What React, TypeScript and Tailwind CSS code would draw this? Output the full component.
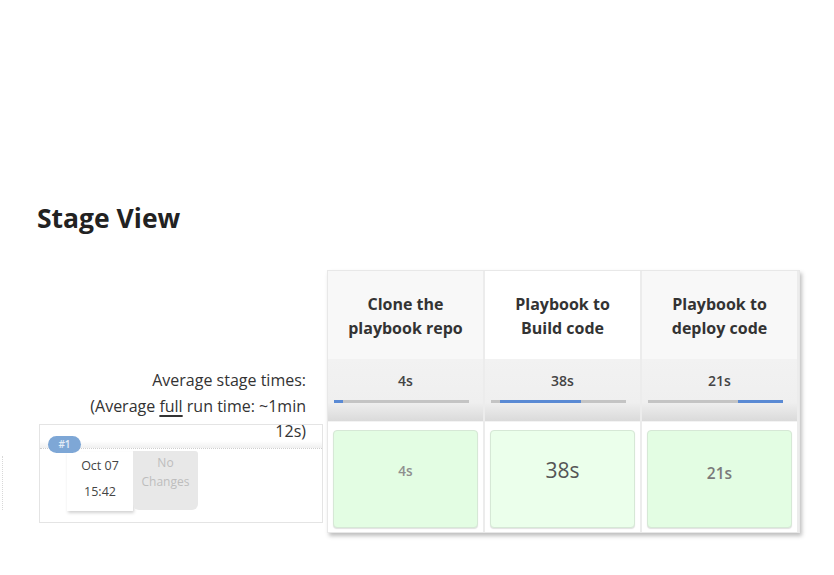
import React from "react";

const font = { fontFamily: '"Open Sans", "Noto Sans", sans-serif' };

type Stage = { name: [string, string]; avg: string; start: number; end: number; hovered?: boolean; runSize: string; runColor: string; runPad: string };

const stages: Stage[] = [
  { name: ["Clone the", "playbook repo"], avg: "4s", start: 0, end: 4 / 63, runSize: "text-[13.5px] font-semibold", runColor: "text-[#8f8f8f]", runPad: "pt-[28px]" },
  { name: ["Playbook to", "Build code"], avg: "38s", start: 4 / 63, end: 42 / 63, hovered: true, runSize: "text-[21px] font-medium", runColor: "text-[#555]", runPad: "pt-[27px]" },
  { name: ["Playbook to", "deploy code"], avg: "21s", start: 42 / 63, end: 1, runSize: "text-[15.5px] font-semibold", runColor: "text-[#7a7a7a]", runPad: "pt-[30px]" },
];

export default function App() {
  return (
    <div className="w-[834px] h-[575px] bg-white relative overflow-hidden text-[#333]" style={font}>
      <div className="absolute left-[2px] top-[456px] h-[54px] border-l border-dotted border-[#d8d8d8]" />
      <h2 className="pt-[202px] pl-[37px] text-[26.5px] font-bold leading-[32px] text-[#222]">Stage View</h2>
      <div className="flex mt-[36px]">
        {/* left column */}
        <div className="w-[327px] shrink-0 flex flex-col">
          <div className="h-[88px]" />
          <div className="h-[62px] pr-[21px] pt-[10px] text-right text-[16px] leading-[25.5px] text-[#333] relative z-10 whitespace-nowrap">
            <div>Average stage times:</div>
            <div>
              (Average <span className="underline underline-offset-[3px] decoration-[1.5px]">full</span> run time: ~1min
            </div>
            <div>12s)</div>
          </div>
          <div className="mt-[4px] ml-[39px] w-[284px] h-[99px] border border-[#e4e4e4] relative">
            <div className="h-[24px] border-b border-dotted border-[#cfcfcf] bg-[linear-gradient(#ffffff_70%,#f0f0f0)]" />
            <div className="absolute left-[8px] top-[11px] w-[33px] h-[17px] rounded-full bg-[#7ea7d6] text-white/80 text-[10px] leading-[17px] text-center font-semibold z-10">
              #1
            </div>
            <div className="flex ml-[27px] mt-[3px]">
              <div className="w-[66px] h-[59px] bg-white shadow-[1px_2px_3px_rgba(0,0,0,0.18)] flex flex-col items-center text-[12.5px] text-[#444] leading-[26px] pt-[1px]">
                <div>Oct 07</div>
                <div>15:42</div>
              </div>
              <div className="w-[65px] h-[59px] bg-[#e8e8e8] rounded-b-[6px] rounded-tr-[3px] flex flex-col items-center text-[12px] text-[#bdbdbd] leading-[19px] pt-[2px] -mt-[1px]">
                <div>No</div>
                <div>Changes</div>
              </div>
            </div>
          </div>
        </div>
        {/* stage table */}
        <div className="w-[473px] bg-[#ececec] shadow-[2px_3px_4px_rgba(0,0,0,0.25)] border border-[#e8e8e8] flex gap-[2px]">
          {stages.map((s, i) => (
            <div key={i} className="w-[155px] flex flex-col bg-white">
              <div
                className={`h-[88px] flex flex-col items-center justify-center pt-[2px] text-[16px] font-bold leading-[24px] text-[#333] ${
                  s.hovered ? "bg-white" : "bg-[#f8f8f8]"
                }`}
              >
                <div>{s.name[0]}</div>
                <div>{s.name[1]}</div>
              </div>
              <div className="h-[62px] bg-[linear-gradient(#f2f2f2_0%,#efefef_70%,#dadada_100%)] pt-[12px]">
                <div className="text-center text-[14px] font-semibold leading-[20px] text-[#444]">{s.avg}</div>
                <div className="ml-[6px] mt-[9px] w-[135px] h-[3px] bg-[#c4c4c4] relative">
                  <div
                    className="absolute top-0 h-[3px] bg-[#5a8ad4]"
                    style={{ left: `${s.start * 100}%`, width: `${(s.end - s.start) * 100}%` }}
                  />
                </div>
              </div>
              <div className="flex-1 bg-white px-[5px] pt-[8px] pb-[4px] border-t border-[#f3f3f3]">
                <div
                  className={`h-[98px] rounded-[4px] border border-[#d6e8d6] shadow-[0_1px_1px_rgba(0,0,0,0.12)] flex justify-center ${s.runPad} ${
                    s.hovered ? "bg-[#ebffeb]" : "bg-[#e3fde3]"
                  }`}
                >
                  <span className={`${s.runSize} ${s.runColor} leading-[24px]`}>{s.avg}</span>
                </div>
              </div>
            </div>
          ))}
        </div>
      </div>
    </div>
  );
}
